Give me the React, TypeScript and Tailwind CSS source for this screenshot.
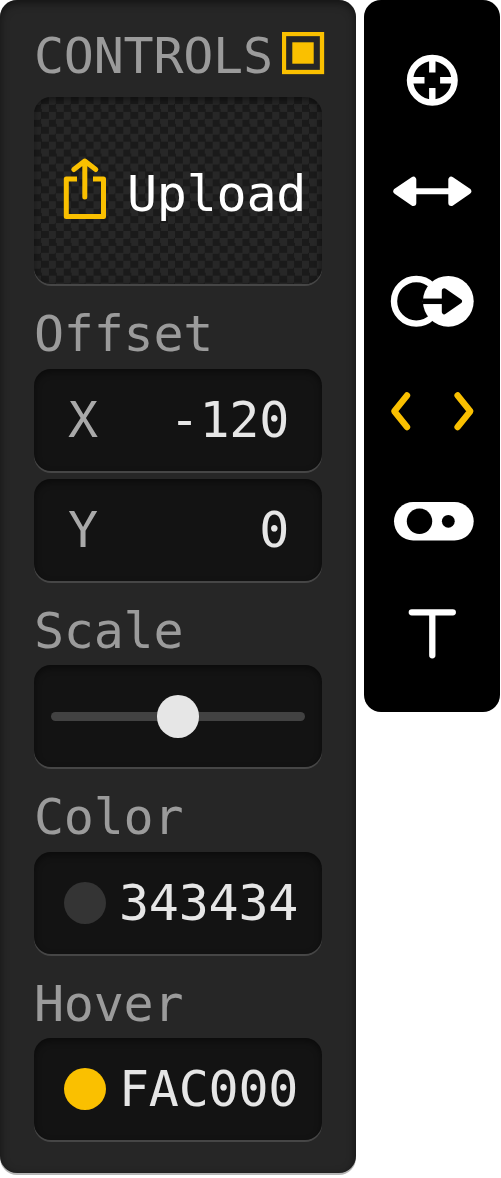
import type { ReactNode } from "react";

const inset =
  "rounded-[17px] shadow-[0_2px_0_#464646,inset_0_3px_7px_rgba(0,0,0,0.45)]";

function Label({ children }: { children: ReactNode }) {
  return (
    <div className="h-[84.4px] pt-4 leading-[68px] text-[#9b9b9b]">
      {children}
    </div>
  );
}

function Field({ name, value }: { name: string; value: string }) {
  return (
    <div
      className={`flex h-[102px] items-center justify-between bg-[#131313] pl-[34px] pr-[33px] ${inset}`}
    >
      <span className="text-[#a9a9a9]">{name}</span>
      <span className="text-[#e6e6e6]">{value}</span>
    </div>
  );
}

function ColorField({ swatch, value }: { swatch: string; value: string }) {
  return (
    <div
      className={`flex h-[102px] items-center gap-[13px] bg-[#131313] pl-[29.5px] ${inset}`}
    >
      <span className={`size-[42.5px] shrink-0 rounded-full ${swatch}`} />
      <span className="text-[#e6e6e6]">{value}</span>
    </div>
  );
}

function Tool({ label, children }: { label: string; children: ReactNode }) {
  return (
    <button aria-label={label} className="flex h-[110.2px] w-full items-center justify-center">
      <svg width="90" height="60" viewBox="-45.300 -30.300 90 60" fill="none">
        {children}
      </svg>
    </button>
  );
}

export default function App() {
  return (
    <div className="flex h-[1178px] w-[501px] items-start gap-[8.4px] overflow-hidden bg-white font-['DejaVu_Sans_Mono',monospace] text-[50px] leading-[58px] tracking-[-0.25px]">
      <section className="h-[1173px] w-[356px] shrink-0 rounded-[17px] bg-[#262626] px-[34px] shadow-[0_2px_0_#b5b5b5,inset_0_3px_9px_rgba(0,0,0,0.5)]">
        <header className="flex h-[97px] items-start pt-[27px]">
          <h1 className="w-[248px] shrink-0 text-[#9b9b9b]">CONTROLS</h1>
          <svg
            width="43"
            height="43"
            viewBox="0 0 43 43"
            className="mt-[5px] shrink-0"
          >
            <rect
              x="2"
              y="2"
              width="38"
              height="38"
              fill="none"
              stroke="#fac000"
              strokeWidth="4.300"
            />
            <rect x="10.300" y="10.300" width="21.400" height="21.400" fill="#fac000" />
          </svg>
        </header>

        <button
          className={`flex h-[187.3px] w-full items-center gap-[21px] bg-[conic-gradient(#1a1a1a_25%,#272727_0_50%,#1a1a1a_0_75%,#272727_0)] bg-[length:14.9px_14.9px] pl-[28px] text-white ${inset}`}
        >
          <svg
            width="44"
            height="64"
            viewBox="0 0 44 64"
            className="mb-[5px] shrink-0"
            fill="none"
            stroke="#fac000"
            strokeWidth="5"
            strokeLinejoin="round"
          >
            <path d="M15 23H4.300V60.500H41.500V23H31" />
            <path d="M22.800 41V5M11.800 13.500L22.800 5L33.800 13.500" strokeLinecap="round" />
          </svg>
          <span className="pt-[7px]">Upload</span>
        </button>

        <Label>Offset</Label>
        <div className="flex flex-col gap-[8.3px]">
          <Field name="X" value="-120" />
          <Field name="Y" value="0" />
        </div>

        <Label>Scale</Label>
        <div className={`flex h-[102px] items-center bg-[#131313] px-[17px] ${inset}`}>
          <span className="h-[8.5px] flex-1 rounded-l-full bg-[#424242]" />
          <span className="z-10 -mx-1 size-[42.5px] rounded-full bg-[#e6e6e6]" />
          <span className="h-[8.5px] flex-1 rounded-r-full bg-[#424242]" />
        </div>

        <Label>Color</Label>
        <ColorField swatch="bg-[#343434]" value="343434" />

        <Label>Hover</Label>
        <ColorField swatch="bg-[#fac000]" value="FAC000" />
      </section>

      <nav className="flex h-[712px] w-[135.5px] shrink-0 flex-col rounded-[17px] bg-black pt-[25.3px]">
        <Tool label="Target">
          <circle r="22.300" stroke="white" strokeWidth="6.400" />
          <path
            d="M0-22V-7.800M0 22V7.800M-22 0H-7.800M22 0H7.800"
            stroke="white"
            strokeWidth="6.400"
          />
        </Tool>
        <Tool label="Width">
          <path d="M-20 0H20" stroke="white" strokeWidth="6" />
          <path
            d="M-36 0L-19-11.700V11.700ZM36 0L19-11.700V11.700Z"
            fill="white"
            stroke="white"
            strokeWidth="6"
            strokeLinejoin="round"
          />
        </Tool>
        <Tool label="Transition">
          <circle cx="-16" r="22.300" stroke="white" strokeWidth="6.400" />
          <circle cx="16" r="25.400" fill="white" />
          <path d="M-9.500 0H12" stroke="black" strokeWidth="5.500" />
          <path
            d="M12-10.500L27.200 0L12 10.500Z"
            fill="black"
            stroke="black"
            strokeWidth="5"
            strokeLinejoin="round"
          />
        </Tool>
        <Tool label="Code">
          <path
            d="M-25.300-15.800L-38 0L-25.300 15.800M25.300-15.800L38 0L25.300 15.800"
            stroke="#fac000"
            strokeWidth="6.400"
            strokeLinecap="round"
            strokeLinejoin="round"
          />
        </Tool>
        <Tool label="Toggle">
          <rect x="-38.300" y="-19.200" width="79.700" height="38.400" rx="19.200" fill="white" />
          <circle cx="-12.800" r="12.700" fill="black" />
          <circle cx="16" r="6.400" fill="black" />
        </Tool>
        <Tool label="Text">
          <path
            d="M-20.500-19H20.500M0-19V24"
            stroke="white"
            strokeWidth="6.300"
            strokeLinecap="round"
          />
        </Tool>
      </nav>
    </div>
  );
}
